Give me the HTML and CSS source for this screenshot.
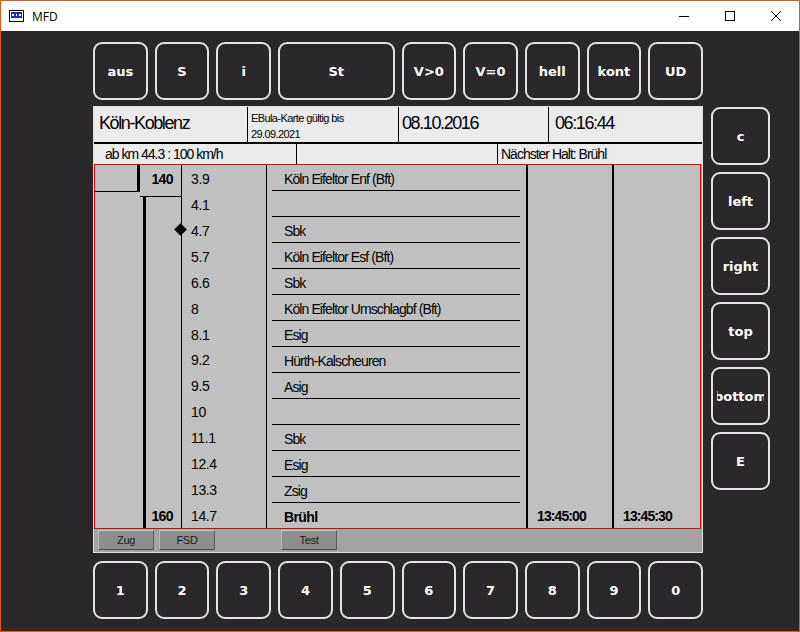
FILE: index.html
```html
<!DOCTYPE html>
<html lang="de">
<head>
    <meta charset="UTF-8">
    <meta name="viewport" content="width=device-width, initial-scale=1.0">
    <title>MFD</title>
    <link rel="stylesheet" href="styles.css">
</head>
<body>

  <div class="window">
    <div class="titlebar">
      <svg class="app-icon" width="15" height="12" viewBox="0 0 15 12">
        <rect x="0.5" y="0.5" width="14" height="11" fill="#fff" stroke="#000"/>
        <rect x="2" y="2" width="11" height="6" fill="#1c2bb8"/>
        <rect x="3" y="4" width="2" height="2" fill="#fff"/>
        <rect x="7" y="4" width="1" height="2" fill="#fff"/>
        <rect x="10" y="4" width="2" height="2" fill="#fff"/>
      </svg>
      <span class="title">MFD</span>
      <div class="controls">
        <svg width="46" height="30" viewBox="0 0 46 30"><path d="M18 15.5h10" stroke="#000"/></svg>
        <svg width="46" height="30" viewBox="0 0 46 30"><rect x="18.5" y="10.5" width="9" height="9" fill="none" stroke="#000"/></svg>
        <svg width="46" height="30" viewBox="0 0 46 30"><path d="M18 10l10 10M28 10l-10 10" stroke="#000"/></svg>
      </div>
    </div>

    <div class="screen">
      <!-- function keys above the display -->
      <div class="keyrow">
        <button class="key"><span class="cap">aus</span></button>
        <button class="key"><span class="cap">S</span></button>
        <button class="key"><span class="cap">i</span></button>
        <button class="key wide"><span class="cap">St</span></button>
        <button class="key"><span class="cap">V&gt;0</span></button>
        <button class="key"><span class="cap">V=0</span></button>
        <button class="key"><span class="cap">hell</span></button>
        <button class="key"><span class="cap">kont</span></button>
        <button class="key"><span class="cap">UD</span></button>
      </div>

      <div class="middle">
        <div class="ebula">
          <div class="head">
            <div class="cell route">Köln-Koblenz</div>
            <div class="cell valid">EBula-Karte gültig bis<br>29.09.2021</div>
            <div class="cell big">08.10.2016</div>
            <div class="cell big">06:16:44</div>
          </div>
          <div class="subhead">
            <div class="cell">ab km 44.3 : 100 km/h</div>
            <div class="cell"></div>
            <div class="cell">Nächster Halt: Brühl</div>
          </div>

          <div class="track">
            <div class="col col-a">
              <div class="first-a"></div>
              <div class="rest"></div>
            </div>
            <div class="col col-b">
              <div class="first-b">140</div>
              <div class="speedbar">
                <div class="last-b">160</div>
              </div>
            </div>
            <div class="col col-km">
              <div class="km">3.9</div>
              <div class="km">4.1</div>
              <div class="km here">4.7</div>
              <div class="km">5.7</div>
              <div class="km">6.6</div>
              <div class="km">8</div>
              <div class="km">8.1</div>
              <div class="km">9.2</div>
              <div class="km">9.5</div>
              <div class="km">10</div>
              <div class="km">11.1</div>
              <div class="km">12.4</div>
              <div class="km">13.3</div>
              <div class="km">14.7</div>
            </div>
            <div class="col col-name">
              <div class="name">Köln Eifeltor Enf (Bft)</div>
              <div class="name"></div>
              <div class="name">Sbk</div>
              <div class="name">Köln Eifeltor Esf (Bft)</div>
              <div class="name">Sbk</div>
              <div class="name">Köln Eifeltor Umschlagbf (Bft)</div>
              <div class="name">Esig</div>
              <div class="name">Hürth-Kalscheuren</div>
              <div class="name">Asig</div>
              <div class="name"></div>
              <div class="name">Sbk</div>
              <div class="name">Esig</div>
              <div class="name">Zsig</div>
              <div class="name stop">Brühl</div>
            </div>
            <div class="col col-time">
              <div class="time">13:45:00</div>
            </div>
            <div class="col col-time last">
              <div class="time">13:45:30</div>
            </div>
          </div>

          <div class="tabs">
            <div class="tab">Zug</div>
            <div class="tab">FSD</div>
            <div class="tab hidden"></div>
            <div class="tab">Test</div>
          </div>
        </div>

        <div class="side">
          <button class="key"><span class="cap">c</span></button>
          <button class="key"><span class="cap">left</span></button>
          <button class="key"><span class="cap">right</span></button>
          <button class="key"><span class="cap">top</span></button>
          <button class="key"><span class="cap">bottom</span></button>
          <button class="key"><span class="cap">E</span></button>
        </div>
      </div>

      <!-- number keys -->
      <div class="keyrow">
        <button class="key"><span class="cap">1</span></button>
        <button class="key"><span class="cap">2</span></button>
        <button class="key"><span class="cap">3</span></button>
        <button class="key"><span class="cap">4</span></button>
        <button class="key"><span class="cap">5</span></button>
        <button class="key"><span class="cap">6</span></button>
        <button class="key"><span class="cap">7</span></button>
        <button class="key"><span class="cap">8</span></button>
        <button class="key"><span class="cap">9</span></button>
        <button class="key"><span class="cap">0</span></button>
      </div>
    </div>
  </div>

</body>
</html>
```

FILE: styles.css
```css
*, *::before, *::after {
  box-sizing: border-box;
}

body {
  margin: 0;
  background: #2a282b;
}

.window {
  width: 800px;
  height: 632px;
  border: 1px solid #e8590c;
  background: #2a282b;
  overflow: hidden;
}

/* title bar */
.titlebar {
  display: flex;
  align-items: center;
  height: 30px;
  background: #fff;
}

.app-icon {
  margin-left: 8px;
}

.title {
  margin-left: 8px;
  font: 12px 'Open Sans', 'Noto Sans', sans-serif;
  color: #000;
}

.controls {
  display: flex;
  margin-left: auto;
}

/* content */
.screen {
  padding: 11px 0 0 92px;
}

.keyrow {
  display: grid;
  grid-template-columns: repeat(10, minmax(0, 1fr));
  gap: 7px;
  width: 610px;
  height: 58px;
}

.key {
  display: flex;
  align-items: center;
  min-width: 0;
  padding: 0 4px;
  border: 2px solid #e4e4e4;
  border-radius: 9px;
  background: #2a282b;
  color: #fff;
  font: bold 13px 'DejaVu Sans', Verdana, sans-serif;
  cursor: pointer;
  appearance: none;
}

.key .cap {
  display: flex;
  justify-content: center;
  width: 100%;
  overflow: hidden;
  white-space: nowrap;
}

.key.wide {
  grid-column: span 2;
}

.middle {
  display: flex;
  gap: 8px;
  margin: 6px 0 8px;
}

.side {
  display: grid;
  grid-template-columns: minmax(0, 1fr);
  grid-template-rows: repeat(6, 58px);
  gap: 7px;
  width: 59px;
  margin-top: 1px;
}

/* EBula display */
.ebula {
  display: flex;
  flex-direction: column;
  width: 610px;
  height: 447px;
  border: 1px solid #dedede;
  background: #a3a3a3;
  color: #000;
  font-family: 'Liberation Sans', Arial, sans-serif;
}

.head {
  display: grid;
  grid-template-columns: 153px 151px 150px 1fr;
  height: 37px;
  border-bottom: 2px solid #000;
  background: #ebebeb;
}

.head .cell + .cell,
.subhead .cell + .cell {
  border-left: 1px solid #000;
}

.route, .big {
  padding: 6px 0 0 5px;
  font-size: 18px;
  letter-spacing: -1.4px;
}

.big {
  padding-left: 3px;
}

.head .big:last-child {
  padding-left: 6px;
}

.valid {
  padding: 3px 0 0 3px;
  font-size: 11px;
  line-height: 16px;
  letter-spacing: -0.6px;
}

.subhead {
  display: grid;
  grid-template-columns: 202px 201px 1fr;
  height: 20px;
  background: #ebebeb;
  font-size: 14px;
  line-height: 21px;
  letter-spacing: -1px;
}

.subhead .cell:first-child {
  padding-left: 11px;
}

.subhead .cell:last-child {
  padding-left: 3px;
}

.track {
  display: flex;
  height: 365px;
  margin-right: 1px;
  border: 1px solid #e00000;
  background: #c0c0c0;
  font-size: 14px;
  letter-spacing: -0.9px;
}

.col {
  display: flex;
  flex-direction: column;
}

.col-a { width: 45px; }
.col-b { width: 41px; }
.col-km { width: 86px; }
.col-name { width: 259px; }
.col-time { width: 86px; }
.col-time.last { flex: 1; }

.col > div {
  flex: 1;
}

.first-a {
  border-right: 3px solid #000;
  border-bottom: 1px solid #000;
}

.col-a .rest {
  flex: 13;
}

.first-b,
.last-b {
  padding: 6px 8px 0 0;
  font-weight: bold;
  text-align: right;
  letter-spacing: -0.6px;
}

.first-b {
  border-bottom: 1px solid #000;
}

.col-b .speedbar {
  flex: 13;
  display: flex;
  flex-direction: column;
  justify-content: flex-end;
  margin-left: 3px;
  border-left: 3px solid #000;
}

.last-b {
  height: 26px;
}

.col-km {
  border-left: 1px solid #000;
  border-right: 1px solid #000;
}

.km {
  position: relative;
  padding: 6px 0 0 9px;
  letter-spacing: -0.4px;
}

/* current position marker */
.km.here::before {
  content: '';
  position: absolute;
  left: -6px;
  top: 8px;
  width: 9px;
  height: 9px;
  background: #000;
  transform: rotate(45deg);
}

.name {
  margin: 0 6px 0 5px;
  padding: 6px 0 0 12px;
  border-bottom: 1px solid #000;
  white-space: nowrap;
}

.name.stop {
  border-bottom: none;
  font-weight: bold;
  letter-spacing: -0.6px;
}

.col-time {
  justify-content: flex-end;
  border-left: 2px solid #000;
}

.col-time .time {
  flex: none;
  height: 26px;
  padding: 6px 0 0 9px;
  font-weight: bold;
  letter-spacing: -0.9px;
}

.tabs {
  display: flex;
  gap: 5px;
  height: 23px;
  padding: 1px 0 0 4px;
}

.tab {
  width: 56px;
  height: 20px;
  border-top: 1px solid #d0d0d0;
  border-left: 1px solid #b8b8b8;
  border-right: 1px solid #5a5a5a;
  border-bottom: 1px solid #4a4a4a;
  background: #8e8e8e;
  color: #1a1a1a;
  font-size: 11px;
  line-height: 18px;
  text-align: center;
  letter-spacing: -0.3px;
}

.tab.hidden {
  visibility: hidden;
}
```
